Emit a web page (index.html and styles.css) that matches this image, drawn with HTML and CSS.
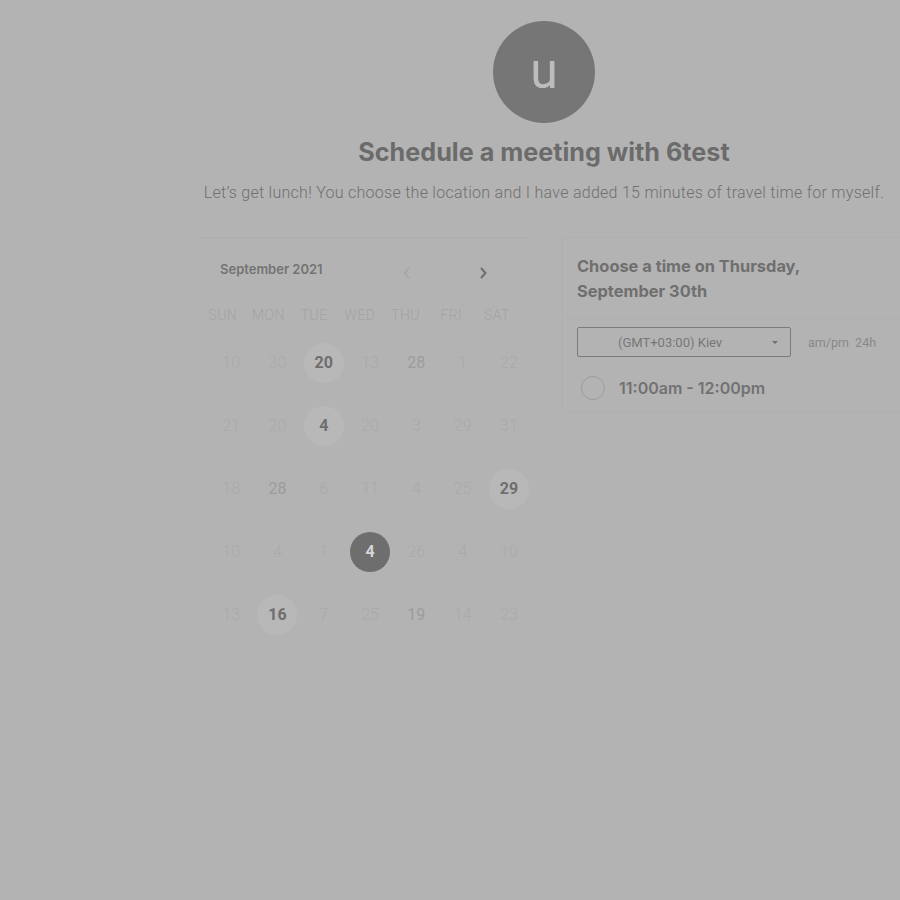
FILE: index.html
```html
<!DOCTYPE html>
<html>
<head>
<meta charset="utf-8">
<link rel="stylesheet" href="styles.css">
</head>
<body>
<div class="page">
  <header class="intro">
    <div class="avatar">u</div>
    <h1 class="title">Schedule a meeting with 6test</h1>
    <p class="desc">Let’s get lunch! You choose the location and I have added 15 minutes of travel time for myself.</p>
  </header>
  <main class="columns">
    <section class="calendar">
      <div class="cal-head">
        <span class="month">September 2021</span>
        <span class="nav prev"><svg width="10" height="14" viewBox="0 0 10 14"><path d="M7 2 L2.5 7 L7 12" fill="none" stroke="#a5a5a5" stroke-width="1.5"/></svg></span>
        <span class="nav next"><svg width="10" height="14" viewBox="0 0 10 14"><path d="M3 2 L7.5 7 L3 12" fill="none" stroke="#6e6e6e" stroke-width="2"/></svg></span>
      </div>
      <div class="weekdays">
        <span>SUN</span><span>MON</span><span>TUE</span><span>WED</span><span>THU</span><span>FRI</span><span>SAT</span>
      </div>
      <div class="days">
        <span class="d">10</span><span class="d">30</span><span class="d on">20</span><span class="d">13</span><span class="d mid">28</span><span class="d">1</span><span class="d">22</span>
        <span class="d">21</span><span class="d">20</span><span class="d on">4</span><span class="d">20</span><span class="d">3</span><span class="d">29</span><span class="d">31</span>
        <span class="d">18</span><span class="d mid">28</span><span class="d">6</span><span class="d">11</span><span class="d">4</span><span class="d">25</span><span class="d on">29</span>
        <span class="d">10</span><span class="d">4</span><span class="d">1</span><span class="d sel">4</span><span class="d">26</span><span class="d">4</span><span class="d">10</span>
        <span class="d">13</span><span class="d on">16</span><span class="d">7</span><span class="d">25</span><span class="d mid">19</span><span class="d">14</span><span class="d">23</span>
      </div>
    </section>
    <section class="times">
      <div class="times-head">Choose a time on Thursday,<br>September 30th</div>
      <div class="times-body">
        <div class="tz-row">
          <div class="tz-select">
            <span>(GMT+03:00) Kiev</span>
            <span class="caret"></span>
          </div>
          <span class="fmt">am/pm&nbsp;&nbsp;24h</span>
        </div>
        <div class="slot">
          <span class="radio"></span>
          <span class="slot-text">11:00am - 12:00pm</span>
        </div>
      </div>
    </section>
  </main>
</div>
</body>
</html>
```
FILE: styles.css
```css
html, body {
  margin: 0;
  padding: 0;
  background: #b3b3b3;
  overflow: hidden;
}
.page {
  width: 688px;
  margin-left: 200px;
  padding-top: 21px;
}
.intro {
  display: flex;
  flex-direction: column;
  align-items: center;
}
.avatar {
  width: 102px;
  height: 102px;
  border-radius: 50%;
  background: #767676;
  color: #bcbcbc;
  font-family: Roboto, sans-serif;
  font-size: 50px;
  line-height: 100px;
  text-align: center;
}
.title {
  margin: 14px 0 0;
  font-family: Inter, sans-serif;
  font-weight: 700;
  font-size: 25.2px;
  line-height: 30px;
  color: #6b6b6b;
}
.desc {
  margin: 16px 0 0;
  font-family: Roboto, sans-serif;
  font-size: 16px;
  font-weight: 300;
  letter-spacing: 0.27px;
  line-height: 20px;
  color: #707070;
  white-space: nowrap;
}
.columns {
  display: flex;
  gap: 34px;
  margin-top: 34px;
}
.calendar {
  width: 328px;
  flex: none;
  border-top: 1px solid #acacac;
}
.cal-head {
  height: 65px;
  display: flex;
  align-items: center;
  font-family: Inter, sans-serif;
}
.month {
  margin: 0 0 4px 20px;
  font-size: 13px;
  font-weight: 600;
  color: #737373;
  width: 182px;
}
.nav {
  display: flex;
  margin-top: 4px;
}
.next { margin-left: 66px; }
.weekdays {
  display: grid;
  grid-template-columns: repeat(7, 45.7px);
  height: 24px;
  align-items: center;
  font-family: Roboto, sans-serif;
  font-size: 14px;
  font-weight: 300;
  color: #a3a3a3;
  letter-spacing: 0.5px;
}
.weekdays span { text-align: center; }
.days {
  display: grid;
  grid-template-columns: repeat(7, 46.3px);
  grid-auto-rows: 63px;
  margin: 4px 0 0 8px;
  width: 324px;
  font-family: Roboto, sans-serif;
  font-size: 16px;
}
.d {
  align-self: center;
  justify-self: center;
  width: 40px;
  height: 40px;
  border-radius: 50%;
  display: flex;
  align-items: center;
  justify-content: center;
  color: #aaaaaa;
  font-weight: 300;
}
.d.mid { color: #9c9c9c; font-weight: 400; }
.d.on { background: #b8b8b8; color: #6e6e6e; font-weight: 700; }
.d.sel { background: #6e6e6e; color: #d6d6d6; font-weight: 700; }
.times {
  flex: none;
  width: 360px;
  font-family: Inter, sans-serif;
}
.times-head {
  border: 1px solid #afafaf;
  border-right: none;
  padding: 16px 0 14px 14px;
  font-size: 16.4px;
  font-weight: 700;
  line-height: 25px;
  color: #6f6f6f;
}
.times-body {
  border: 1px solid #afafaf;
  border-top: none;
  border-right: none;
  padding: 8px 0 12px 14px;
}
.tz-row {
  display: flex;
  align-items: center;
}
.tz-select {
  height: 28px;
  border: 1px solid #7a7a7a;
  border-radius: 2px;
  display: flex;
  align-items: center;
  justify-content: space-between;
  padding: 0 12px 0 40px;
  width: 160px;
  font-family: Roboto, sans-serif;
  font-size: 13px;
  color: #777777;
}
.caret {
  width: 0;
  height: 0;
  border-left: 3px solid transparent;
  border-right: 3px solid transparent;
  border-top: 3px solid #707070;
}
.fmt {
  margin-left: 17px;
  font-family: Roboto, sans-serif;
  font-size: 12.5px;
  color: #888888;
}
.slot {
  display: flex;
  align-items: center;
  margin-top: 19px;
  padding-left: 4px;
}
.radio {
  width: 22px;
  height: 22px;
  border: 1px solid #9c9c9c;
  border-radius: 50%;
}
.slot-text {
  margin-left: 14px;
  font-size: 16px;
  font-weight: 600;
  color: #727272;
}
```
